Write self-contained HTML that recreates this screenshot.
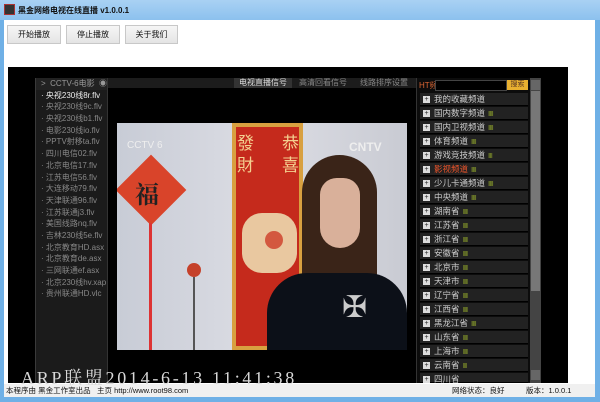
<!DOCTYPE html>
<html><head><meta charset="utf-8"><style>
*{margin:0;padding:0;box-sizing:border-box}
body{width:600px;height:402px;overflow:hidden;background:#6fb0e6;font-family:"Liberation Sans","Noto Sans CJK SC",sans-serif;font-size:9px;position:relative}
.abs{position:absolute}
#title{left:0;top:0;width:600px;height:20px;background:linear-gradient(#a9d1f3,#8cc1ee);}
#title span{position:absolute;left:18px;top:5px;font-size:8px;font-weight:bold;color:#111}
#client{left:4px;top:20px;width:591px;height:377px;background:#fff}
.btn{top:25px;height:19px;background:linear-gradient(#f6f6f6,#e4e4e4);border:1px solid #c8c8c8;font-size:8px;text-align:center;line-height:17px;color:#111}
#black{left:8px;top:67px;width:560px;height:316px;background:#000}
#left{left:35px;top:78px;width:73px;height:305px;background:#1b1b1b;border-left:1px solid #3a3a3a;border-right:1px solid #333}
#left div{height:11.7px;line-height:11.7px;color:#888;font-size:8px;padding-left:5px;white-space:nowrap}
#tabs{left:108px;top:78px;width:308px;height:10px;background:#1c1c1c}
.tab{position:absolute;top:0;height:10px;line-height:10px;font-size:8px;color:#888;text-align:center}
#right{left:416px;top:78px;width:114px;height:305px;background:#0c0c0c;border-left:1px solid #333}
.row{position:absolute;left:3px;width:108px;height:13px;background:#222;border-bottom:1px solid #000;color:#ccc;font-size:8.5px;line-height:13px;padding-left:14px;white-space:nowrap}
.row:before{content:"+";position:absolute;left:3px;top:3px;width:7px;height:7px;background:#ddd;color:#222;font-size:7px;line-height:7px;text-align:center}
.bars{color:#7a8a2a;font-size:7px;letter-spacing:-1px;margin-left:3px}
#scroll{left:530px;top:78px;width:11px;height:305px;background:#444}
#status{left:4px;top:384px;width:591px;height:13px;background:#f0f0f0;font-size:7.5px;line-height:13px;color:#111}
</style></head><body>
<div id="title" class="abs"><div class="abs" style="left:4px;top:4px;width:11px;height:11px;background:#333;border:1px solid #a33"></div><span>黑金网络电视在线直播 v1.0.0.1</span></div>
<div id="client" class="abs"></div>
<div class="abs btn" style="left:7px;width:54px">开始播放</div>
<div class="abs btn" style="left:66px;width:54px">停止播放</div>
<div class="abs btn" style="left:125px;width:53px">关于我们</div>
<div id="black" class="abs"></div>
<div id="left" class="abs">
<div style="color:#999;background:#222">&gt;&nbsp; CCTV-6电影 &nbsp;◉</div>
<div style="color:#eee">· 央视230线8r.flv</div>
<div>· 央视230线9c.flv</div><div>· 央视230线b1.flv</div><div>· 电影230线io.flv</div><div>· PPTV射移ta.flv</div><div>· 四川电信02.flv</div><div>· 北京电信17.flv</div><div>· 江苏电信56.flv</div><div>· 大连移动79.flv</div><div>· 天津联通96.flv</div><div>· 江苏联通j3.flv</div><div>· 美国线路nq.flv</div><div>· 吉林230线5e.flv</div><div>· 北京教育HD.asx</div><div>· 北京教育de.asx</div><div>· 三网联通ef.asx</div><div>· 北京230线hv.xap</div><div>· 贵州联通HD.vlc</div>
</div>
<div id="tabs" class="abs">
<div class="tab" style="left:126px;width:58px;background:#333;color:#ddd">电视直播信号</div>
<div class="tab" style="left:186px;width:58px">高清回看信号</div>
<div class="tab" style="left:246px;width:60px">线路排序设置</div>
</div>
<div class="abs" style="left:117px;top:123px;width:290px;height:227px;background:linear-gradient(90deg,#c8ccd6,#dcdde4 50%,#c9cbd3);overflow:hidden">
 <div class="abs" style="left:9px;top:42px;width:50px;height:50px;background:#d9442a;transform:rotate(45deg);"></div>
 <div class="abs" style="left:18px;top:52px;font-size:24px;color:#222;font-weight:bold;font-family:'Noto Serif CJK SC',serif">福</div>
 <div class="abs" style="left:32px;top:100px;width:3px;height:127px;background:#d33"></div>
 <div class="abs" style="left:115px;top:0;width:71px;height:227px;background:#c52a1c;border:4px solid #d8a040"></div>
 <div class="abs" style="left:120px;top:10px;font-size:17px;color:#f4d090;line-height:22px;width:10px">發財</div>
 <div class="abs" style="left:165px;top:10px;font-size:17px;color:#f4d090;line-height:22px;width:10px">恭喜</div>
 <div class="abs" style="left:125px;top:90px;width:55px;height:60px;background:#e9c8a0;border-radius:20px"></div>
 <div class="abs" style="left:148px;top:108px;width:18px;height:18px;background:#d3583f;border-radius:50%"></div>
 <div class="abs" style="left:70px;top:140px;width:14px;height:14px;background:#c5412a;border-radius:50%"></div>
 <div class="abs" style="left:76px;top:154px;width:2px;height:73px;background:#555"></div>
 <div class="abs" style="left:185px;top:32px;width:75px;height:200px;background:#3a2418;border-radius:38px 38px 0 0"></div>
 <div class="abs" style="left:203px;top:55px;width:40px;height:70px;background:#d9b09a;border-radius:20px 20px 24px 24px"></div>
 <div class="abs" style="left:150px;top:150px;width:140px;height:80px;background:#0c1018;border-radius:40px 40px 0 0"></div>
 <div class="abs" style="left:225px;top:170px;font-size:30px;color:#ccc;line-height:30px">✠</div>
 <div class="abs" style="left:232px;top:17px;font-size:12px;color:#eee;font-weight:bold">CNTV</div>
 <div class="abs" style="left:10px;top:17px;font-size:10px;color:#eee">CCTV 6</div>
</div>
<div class="abs" style="left:21px;top:368px;font-size:18px;letter-spacing:2.7px;color:#d8d8d8;font-family:'Liberation Serif','Noto Serif CJK SC',serif;white-space:nowrap;z-index:5;line-height:20px">ARP联盟2014-6-13 11:41:38</div>
<div id="right" class="abs">
<div class="abs" style="left:2px;top:2px;font-size:8px;color:#d63">HT频</div>
<div class="abs" style="left:18px;top:2px;width:72px;height:11px;background:#000;border:1px solid #444"></div>
<div class="abs" style="left:90px;top:2px;width:21px;height:10px;background:#e8b030;font-size:7px;line-height:10px;text-align:center;color:#532">搜索</div>
<div class="row" style="top:15px">我的收藏频道</div>
<div class="row" style="top:29px">国内数字频道<span class="bars">IIIII</span></div>
<div class="row" style="top:43px">国内卫视频道<span class="bars">IIIII</span></div>
<div class="row" style="top:57px">体育频道<span class="bars">IIIII</span></div>
<div class="row" style="top:71px">游戏竞技频道<span class="bars">IIII</span></div>
<div class="row" style="top:85px;color:#e8532a">影视频道<span class="bars">IIIII</span></div>
<div class="row" style="top:99px">少儿卡通频道<span class="bars">IIIII</span></div>
<div class="row" style="top:113px">中央频道<span class="bars">IIIII</span></div>
<div class="row" style="top:127px">湖南省<span class="bars">IIIII</span></div>
<div class="row" style="top:141px">江苏省<span class="bars">IIIII</span></div>
<div class="row" style="top:155px">浙江省<span class="bars">IIIII</span></div>
<div class="row" style="top:169px">安徽省<span class="bars">IIIII</span></div>
<div class="row" style="top:183px">北京市<span class="bars">IIIII</span></div>
<div class="row" style="top:197px">天津市<span class="bars">IIIII</span></div>
<div class="row" style="top:211px">辽宁省<span class="bars">IIIII</span></div>
<div class="row" style="top:225px">江西省<span class="bars">IIIII</span></div>
<div class="row" style="top:239px">黑龙江省<span class="bars">IIIII</span></div>
<div class="row" style="top:253px">山东省<span class="bars">IIIII</span></div>
<div class="row" style="top:267px">上海市<span class="bars">IIIII</span></div>
<div class="row" style="top:281px">云南省<span class="bars">IIII</span></div>
<div class="row" style="top:295px;height:10px">四川省</div>
</div>
<div id="scroll" class="abs"><div class="abs" style="left:1px;top:2px;width:9px;height:10px;background:#666"></div><div class="abs" style="left:1px;top:13px;width:9px;height:200px;background:#777"></div><div class="abs" style="left:1px;top:292px;width:9px;height:10px;background:#666"></div></div>
<div id="status" class="abs">
<span class="abs" style="left:2px">本程序由 黑金工作室出品</span>
<span class="abs" style="left:93px">主页 http://www.root98.com</span>
<span class="abs" style="left:448px">网络状态：良好</span>
<span class="abs" style="left:522px">版本：1.0.0.1</span>
</div>
</body></html>
